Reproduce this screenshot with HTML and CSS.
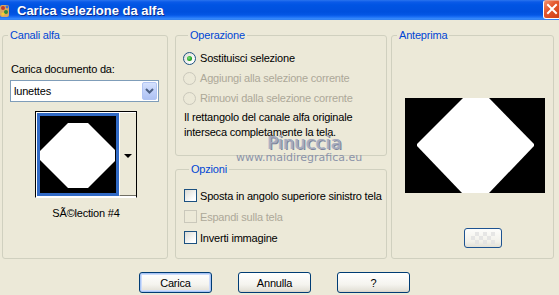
FILE: index.html
```html
<!DOCTYPE html>
<html>
<head>
<meta charset="utf-8">
<link rel="stylesheet" href="styles.css">
</head>
<body>
<div class="titlebar">
  <svg class="appicon" width="11" height="16" viewBox="0 0 11 16">
    <rect x="0" y="2" width="9" height="12" rx="2" fill="#d9a860"/>
    <circle cx="3" cy="5" r="2" fill="#c0392b"/>
    <circle cx="6" cy="9" r="2" fill="#2e8b3a"/>
    <circle cx="3" cy="11" r="1.6" fill="#f2d22e"/>
    <circle cx="7" cy="4" r="1.4" fill="#3a6fd8"/>
  </svg>
  <span class="title">Carica selezione da alfa</span>
  <div class="close">
    <svg width="16" height="17" viewBox="0 0 16 17"><path d="M4 4 L12 12 M12 4 L4 12" stroke="#fff" stroke-width="2" stroke-linecap="square"/></svg>
  </div>
</div>
<div class="main">
  <div class="groups">
    <fieldset class="grp grp-left">
      <legend>Canali alfa</legend>
      <div class="lbl">Carica documento da:</div>
      <div class="select">
        <span class="select-text">lunettes</span>
        <span class="select-btn"><svg width="9" height="6" viewBox="0 0 9 6"><path d="M1 1 L4.5 4.5 L8 1" fill="none" stroke="#4d6185" stroke-width="2"/></svg></span>
      </div>
      <div class="thumb">
        <div class="thumb-img">
          <svg width="75" height="76" viewBox="0 0 75 76"><rect width="75" height="76" fill="#000"/><polygon points="28,7 48,7 75,34 75,45 48,72 28,72 0,44 0,35" fill="#fff"/></svg>
        </div>
        <div class="thumb-btn"><span class="tri"></span></div>
      </div>
      <div class="caption">SÃ©lection #4</div>
    </fieldset>
    <div class="midcol">
      <fieldset class="grp grp-op">
        <legend>Operazione</legend>
        <div class="row"><span class="radio on"></span><span>Sostituisci selezione</span></div>
        <div class="row dis"><span class="radio"></span><span>Aggiungi alla selezione corrente</span></div>
        <div class="row dis"><span class="radio"></span><span>Rimuovi dalla selezione corrente</span></div>
        <p class="note">Il rettangolo del canale alfa originale<br>interseca completamente la tela.</p>
      </fieldset>
      <fieldset class="grp grp-opt">
        <legend>Opzioni</legend>
        <div class="crow"><span class="check"></span><span>Sposta in angolo superiore sinistro tela</span></div>
        <div class="crow dis"><span class="check"></span><span>Espandi sulla tela</span></div>
        <div class="crow"><span class="check"></span><span>Inverti immagine</span></div>
      </fieldset>
    </div>
    <fieldset class="grp grp-prev">
      <legend>Anteprima</legend>
      <svg class="preview" width="140" height="95" viewBox="0 0 140 95"><rect width="140" height="95" fill="#000"/><polygon points="58,0 84,0 129,46 129,48 84,95 57,95 12,48 12,46" fill="#fff"/></svg>
      <div class="smallbtn"><span class="chk"></span></div>
    </fieldset>
  </div>
  <div class="buttons">
    <button class="btn def">Carica</button>
    <button class="btn">Annulla</button>
    <button class="btn">?</button>
  </div>
  <div class="watermark">
    <div class="wm1">Pinuccia</div>
    <div class="wm2">www.maidiregrafica.eu</div>
  </div>
</div>
</body>
</html>
```
FILE: styles.css
```css
* { box-sizing: border-box; }
html, body { margin: 0; padding: 0; }
body {
  width: 559px;
  height: 295px;
  overflow: hidden;
  background: #ECE9D8;
  font-family: "Liberation Sans", Arial, sans-serif;
  font-size: 11px;
  letter-spacing: -0.2px;
  color: #000;
  position: relative;
}
.titlebar {
  height: 20px;
  display: flex;
  align-items: center;
  background: linear-gradient(#2a74ee 0, #0a5ae8 2px, #0054e3 5px, #0050de 12px, #0457e6 15px, #1b6ff5 17px, #3b8dfc 19px, #2c79ec 20px);
  position: relative;
}
.appicon { margin-left: 0; margin-top: 1px; }
.title {
  margin-left: 6px;
  color: #fff;
  font-weight: bold;
  font-size: 13px;
  letter-spacing: 0;
  text-shadow: 1px 1px 0 #0a2c8c;
}
.close {
  position: absolute;
  left: 543px;
  top: 0;
  width: 18px;
  height: 19px;
  border: 1px solid #fff;
  border-top-color: #e8a08a;
  border-radius: 3px;
  background: linear-gradient(135deg, #f2916e 0, #e4572e 40%, #cf3e14 100%);
  display: flex;
  align-items: center;
  justify-content: center;
}
.main { position: relative; }
.groups {
  display: flex;
  padding-left: 2px;
  padding-top: 9px;
  height: 239px;
}
.grp {
  margin: 0;
  padding: 0;
  min-width: 0;
  border: 1px solid #D0D0BF;
  border-radius: 3px;
}
.grp legend {
  margin-left: 5px;
  padding: 0 2px;
  color: #0046D5;
  line-height: 13px;
}
.grp-left {
  width: 166px;
  height: 230px;
  display: flex;
  flex-direction: column;
  align-items: flex-start;
}
.lbl {
  line-height: 13px;
  margin: 21px 0 0 8px;
}
.select {
  margin: 4px 0 0 7px;
  width: 149px;
  height: 22px;
  border: 1px solid #7F9DB9;
  background: #fff;
  display: flex;
  align-items: center;
}
.select-text { flex: 1; padding-left: 3px; }
.select-btn {
  width: 15px;
  height: 18px;
  margin-right: 1px;
  border: 1px solid #B1C4F3;
  border-radius: 2px;
  background: linear-gradient(#d6e2fd, #bccdf8 60%, #afc3f3);
  display: flex;
  align-items: center;
  justify-content: center;
}
.thumb {
  margin: 9px 0 0 32px;
  width: 102px;
  height: 87px;
  display: flex;
  border-top: 1px solid #000;
  border-left: 1px solid #000;
  border-bottom: 1px solid #fff;
  border-right: 1px solid #000;
  background: #fff;
}
.thumb-img {
  margin: 1px 0 1px 1px;
  border: 3px solid #316AC5;
  width: 82px;
  height: 83px;
  background: #000;
  overflow: hidden;
}
.thumb-img svg { display: block; }
.thumb-btn {
  flex: 1;
  margin: 0 0 1px 0;
  background: #ECE9D8;
  border-left: 1px solid #fff;
  border-top: 1px solid #fff;
  border-bottom: 1px solid #716F64;
  display: flex;
  align-items: center;
  justify-content: center;
}
.tri {
  width: 0;
  height: 0;
  border-left: 4px solid transparent;
  border-right: 4px solid transparent;
  border-top: 4px solid #000;
  margin-top: 4px;
}
.caption {
  align-self: center;
  margin-top: 9px;
  line-height: 13px;
  padding-left: 2px;
}
.midcol {
  margin-left: 7px;
  width: 212px;
  display: flex;
  flex-direction: column;
}
.grp-op {
  height: 127px;
  padding-top: 6px;
  padding-left: 7px;
}
.row, .crow {
  display: flex;
  align-items: center;
  height: 20px;
}
.crow { height: 21px; }
.dis { color: #ACA899; }
.radio {
  width: 13px;
  height: 13px;
  border-radius: 50%;
  border: 1px solid #1C5180;
  background: linear-gradient(135deg, #dcdbd4, #fff 80%);
  margin-right: 4px;
  position: relative;
  flex: none;
}
.radio.on::after {
  content: "";
  position: absolute;
  left: 3px;
  top: 3px;
  width: 5px;
  height: 5px;
  border-radius: 50%;
  background: radial-gradient(circle at 40% 40%, #7ee27e, #21a121 60%, #1a8c1a);
}
.dis .radio { border-color: #CAC8BB; background: #ECE9D8; }
.note {
  margin: 2px 0 0 1px;
  line-height: 15px;
}
.grp-opt {
  margin-top: 7px;
  height: 96px;
  padding-top: 9px;
  padding-left: 8px;
}
.check {
  width: 13px;
  height: 13px;
  border: 1px solid #1C5180;
  background: linear-gradient(135deg, #dcdbd4, #fff 80%);
  margin-right: 3px;
  flex: none;
}
.dis .check { border-color: #CAC8BB; background: #ECE9D8; }
.grp-prev {
  margin-left: 4px;
  width: 163px;
  height: 230px;
  display: flex;
  flex-direction: column;
  align-items: flex-start;
}
.preview {
  display: block;
  margin: 56px 0 0 13px;
}
.smallbtn {
  margin: 35px 0 0 72px;
  width: 38px;
  height: 20px;
  border: 1px solid #1d5391;
  border-radius: 3px;
  background: linear-gradient(#fdfdfb, #f2f1ea 70%, #e2e0d6);
  display: flex;
  align-items: center;
  justify-content: center;
}
.chk {
  width: 24px;
  height: 12px;
  background:
    linear-gradient(45deg, #e2e2e2 25%, transparent 25%, transparent 75%, #e2e2e2 75%),
    linear-gradient(45deg, #e2e2e2 25%, transparent 25%, transparent 75%, #e2e2e2 75%);
  background-size: 8px 8px;
  background-position: 0 0, 4px 4px;
  opacity: 0.8;
}
.buttons {
  display: flex;
  gap: 26px;
  padding-left: 139px;
  margin-top: 13px;
}
.btn {
  width: 73px;
  height: 21px;
  padding: 0;
  font-family: "Liberation Sans", Arial, sans-serif;
  font-size: 11px;
  letter-spacing: -0.2px;
  color: #000;
  border: 1px solid #003C74;
  border-radius: 3px;
  background: linear-gradient(#ffffff, #f5f4ef 60%, #e5e3da 90%, #d6d0c5);
}
.btn.def {
  box-shadow: inset 0 0 0 1px #a8c4f5, inset 0 0 0 2px #cddcfb;
}
.watermark {
  position: absolute;
  left: 236px;
  top: 115px;
  width: 124px;
  text-align: center;
  pointer-events: none;
}
.wm1 {
  font-family: "DejaVu Sans", sans-serif;
  font-size: 17.5px;
  letter-spacing: 0.3px;
  line-height: 16px;
  padding-left: 14px;
  color: #a4aabd;
  text-shadow: 1px 1px 0 #7c849b, -1px 0 0 #b7bccb;
}
.wm2 {
  font-family: "DejaVu Sans", sans-serif;
  font-size: 11px;
  letter-spacing: 0;
  line-height: 13px;
  color: #8b93a9;
}
```
